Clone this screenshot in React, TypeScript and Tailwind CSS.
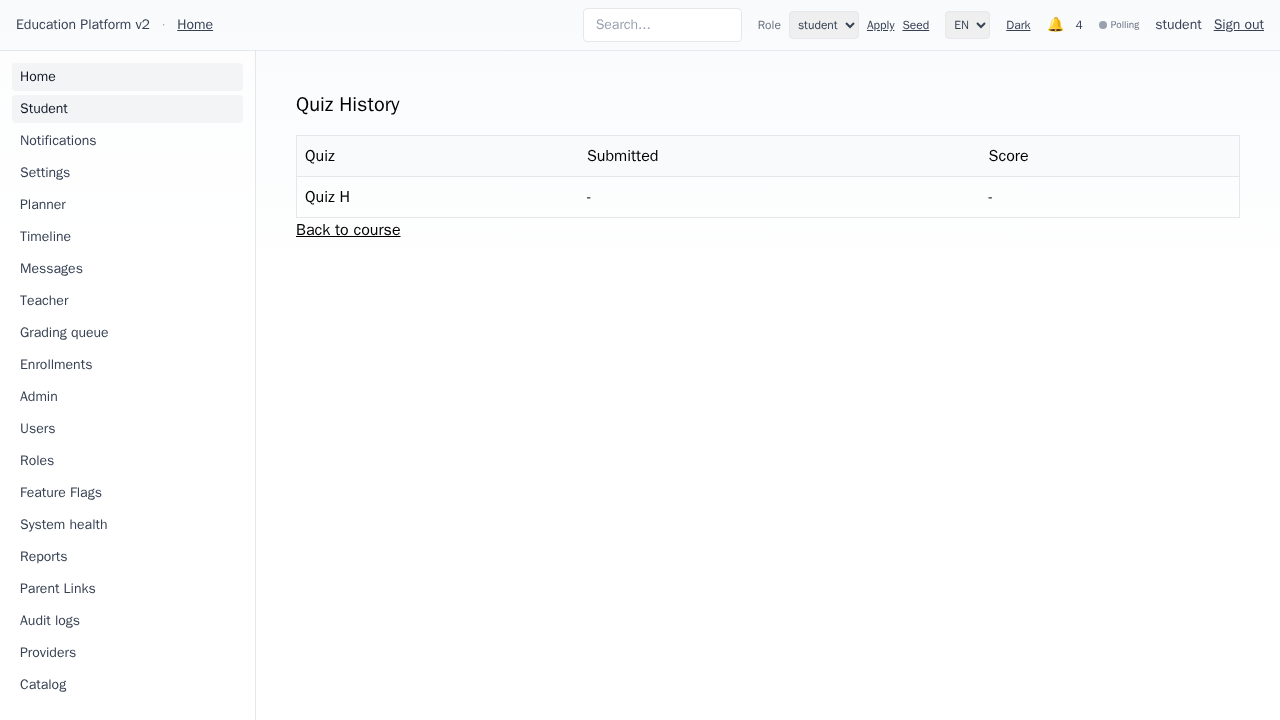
const navItems = [
  "Home", "Student", "Notifications", "Settings", "Planner", "Timeline", "Messages",
  "Teacher", "Grading queue", "Enrollments", "Admin", "Users", "Roles", "Feature Flags",
  "System health", "Reports", "Parent Links", "Audit logs", "Providers", "Catalog",
];
const activeItems = ["Home", "Student"];

function Header() {
  return (
    <header className="flex h-[51px] shrink-0 items-center justify-between border-b border-gray-200 px-4 text-sm text-gray-700">
      <div className="flex items-center gap-3">
        <span>Education Platform v2</span>
        <span className="text-gray-400">·</span>
        <a href="#" className="underline">Home</a>
      </div>
      <div className="flex items-center gap-4">
        <input
          type="text"
          placeholder="Search..."
          className="h-[34px] w-[159px] rounded border border-gray-200 bg-white px-3 text-sm placeholder:text-gray-400"
        />
        <div className="flex items-center gap-2 text-xs">
          <span className="text-gray-500">Role</span>
          <select className="h-7 w-[70px] rounded border border-gray-200 bg-[#efefef] px-1" defaultValue="student">
            <option>student</option>
            <option>teacher</option>
            <option>admin</option>
          </select>
          <button className="underline">Apply</button>
          <button className="underline">Seed</button>
        </div>
        <select className="h-7 w-[45px] rounded border border-gray-200 bg-[#efefef] px-1 text-xs" defaultValue="EN">
          <option>EN</option>
          <option>RU</option>
        </select>
        <button className="text-xs underline">Dark</button>
        <div className="flex items-center gap-3">
          <span>🔔</span>
          <span className="text-xs">4</span>
        </div>
        <div className="flex items-center gap-1 text-[10px] text-gray-500">
          <span className="size-2 rounded-full bg-gray-400" />
          <span>Polling</span>
        </div>
        <div className="flex items-center gap-3">
          <span>student</span>
          <button className="underline">Sign out</button>
        </div>
      </div>
    </header>
  );
}

function Sidebar() {
  return (
    <aside className="w-64 shrink-0 border-r border-gray-200 bg-white/60 p-3">
      <nav className="flex flex-col gap-1 text-sm">
        {navItems.map((item) => (
          <a
            key={item}
            href="#"
            className={
              activeItems.includes(item)
                ? "rounded bg-gray-100 px-2 py-1 text-gray-900"
                : "rounded px-2 py-1 text-gray-700"
            }
          >
            {item}
          </a>
        ))}
      </nav>
    </aside>
  );
}

export default function App() {
  return (
    <div className="flex h-screen flex-col overflow-hidden bg-white bg-[linear-gradient(to_bottom,#f8fafc_0,#ffffff_288px)] font-['WenQuanYi_Zen_Hei','Liberation_Sans',sans-serif] text-black">
      <Header />
      <div className="flex min-h-0 flex-1">
        <Sidebar />
        <main className="flex-1 p-10">
          <h1 className="mb-4 text-xl leading-7">Quiz History</h1>
          <table className="w-full border-collapse border border-gray-200 text-left">
            <thead>
              <tr className="border-b border-gray-200 bg-gray-50">
                <th className="p-2 font-normal">Quiz</th>
                <th className="p-2 font-normal">Submitted</th>
                <th className="p-2 font-normal">Score</th>
              </tr>
            </thead>
            <tbody>
              <tr>
                <td className="p-2">Quiz H</td>
                <td className="p-2">-</td>
                <td className="p-2">-</td>
              </tr>
            </tbody>
          </table>
          <a href="#" className="underline">Back to course</a>
        </main>
      </div>
    </div>
  );
}
